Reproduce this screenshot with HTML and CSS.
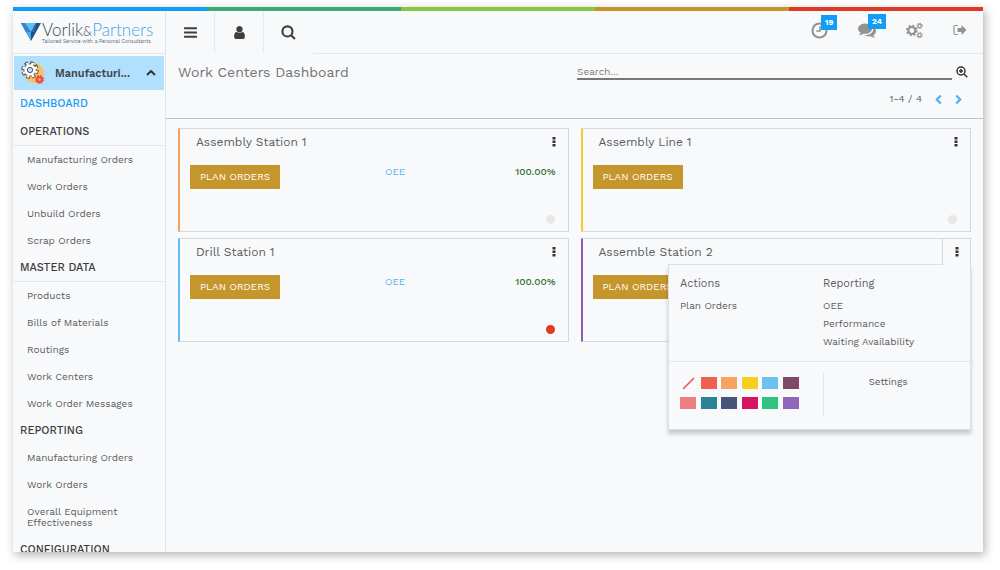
FILE: index.html
```html
<!DOCTYPE html>
<html lang="en">
<head>
<meta charset="utf-8">
<meta name="viewport" content="width=device-width, initial-scale=1">
<title>Work Centers Dashboard</title>
<link rel="stylesheet" href="styles.css">
</head>
<body>
<svg class="defs" aria-hidden="true">
  <symbol id="i-kebab" viewBox="0 0 4 10"><path d="M.5 0h3v2.500h-3zM.5 3.500h3V6h-3zM.5 7h3v2.500h-3z"/></symbol>
</svg>
<div class="app">
  <div class="strip"><i class="s1"></i><i class="s2"></i><i class="s3"></i><i class="s4"></i><i class="s5"></i></div>
  <div class="shell">
    <aside class="sidebar">
      <a class="logo" href="#">
        <svg class="logo-mark" viewBox="0 0 40 36" aria-hidden="true">
          <path fill="#1d4f88" d="M0 0h40L20 36z"/>
          <path fill="#2f86c8" d="M0 0h10l10 18-10 0z"/>
          <path fill="#62bdf2" d="M8 0h22L20 18z"/>
          <path fill="#4aa9e8" d="M10 18h10v18z"/>
          <path fill="#2a6fae" d="M20 18L30 0l-3 18z"/>
        </svg>
        <span class="logo-text">
          <span class="logo-name">Vorlik<small>&amp;</small><b>Partners</b></span>
          <span class="logo-tag">Tailored Service with a Personal Consultants</span>
        </span>
      </a>
      <button class="module" type="button">
        <svg class="module-icon" viewBox="0 0 24 24" aria-hidden="true">
          <circle cx="13" cy="12" r="10" fill="#fbc062"/>
          <circle cx="9" cy="9" r="7" fill="none" stroke="#4a4f5c" stroke-width="3.500" stroke-dasharray="3.500 2"/>
          <circle cx="9" cy="9" r="6.500" fill="#4a4f5c"/>
          <circle cx="9" cy="9" r="6.500" fill="none" stroke="#fff" stroke-width="2.600" stroke-dasharray="2.200 2.900" stroke-dashoffset="-.6"/>
          <circle cx="9" cy="9" r="5.700" fill="#fff"/>
          <circle cx="9" cy="9" r="2.600" fill="#cfe3f5" stroke="#4a4f5c"/>
          <circle cx="18.500" cy="18.500" r="3.600" fill="none" stroke="#ee4f43" stroke-width="2" stroke-dasharray="1.600 1.230"/>
          <circle cx="18.500" cy="18.500" r="2.400" fill="none" stroke="#ee4f43" stroke-width="2.400"/>
        </svg>
        <span class="module-name">Manufacturi...</span>
        <svg class="chev" viewBox="0 0 10 6" aria-hidden="true"><path d="M1 5l4-4 4 4"/></svg>
      </button>
      <nav class="menu">
        <a class="top active" href="#">DASHBOARD</a>
        <h2 class="ruled">OPERATIONS</h2>
        <a href="#">Manufacturing Orders</a>
        <a href="#">Work Orders</a>
        <a href="#">Unbuild Orders</a>
        <a href="#">Scrap Orders</a>
        <h2 class="ruled">MASTER DATA</h2>
        <a href="#">Products</a>
        <a href="#">Bills of Materials</a>
        <a href="#">Routings</a>
        <a href="#">Work Centers</a>
        <a href="#">Work Order Messages</a>
        <h2>REPORTING</h2>
        <a href="#">Manufacturing Orders</a>
        <a href="#">Work Orders</a>
        <a href="#">Overall Equipment Effectiveness</a>
        <h2>CONFIGURATION</h2>
      </nav>
    </aside>
    <div class="content">
      <header class="topbar">
        <div class="tools">
          <button type="button" aria-label="Menu"><svg viewBox="0 0 14 14"><path d="M1 2h12v2H1zM1 6h12v2H1zM1 10h12v2H1z"/></svg></button>
          <button type="button" aria-label="User"><svg viewBox="0 0 1792 1792"><path d="M1536 1399q0 109-62.500 187t-150.500 78h-854q-88 0-150.500-78t-62.500-187q0-85 8.500-160.500t31.500-152 58.500-131 94-89 134.500-34.500q131 128 313 128t313-128q76 0 134.500 34.500t94 89 58.500 131 31.500 152 8.500 160.500zm-256-887q0 159-112.500 271.500t-271.500 112.500-271.500-112.500-112.500-271.500 112.500-271.500 271.500-112.500 271.500 112.500 112.500 271.500z"/></svg></button>
          <button type="button" aria-label="Search"><svg viewBox="0 0 14 14" class="line"><circle cx="6" cy="6" r="4.700"/><path d="M9.500 9.500l3.500 3.500"/></svg></button>
        </div>
        <div class="status">
          <button type="button" aria-label="Activities"><svg viewBox="0 0 16 16" class="line"><circle cx="8" cy="8" r="6.600"/><path class="thin" d="M8.500 4v4.500H5"/></svg><span class="badge">19</span></button>
          <button type="button" aria-label="Messages"><svg class="wide" viewBox="0 0 1792 1792"><path d="M1408 768q0 139-94 257t-256.500 186.500-353.500 68.500q-86 0-176-16-124 88-278 128-36 9-86 16h-3q-11 0-20.500-8t-11.500-21q-1-3-1-6.500t.5-6.500 2-6l2.500-5 3.500-5.500 4-5 4.500-5 4-4.500q5-6 23-25t26-29.500 22.500-29 25-38.500 20.500-44q-124-72-195-177t-71-224q0-139 94-257t256.500-186.500 353.500-68.500 353.500 68.500 256.500 186.500 94 257zm384 256q0 120-71 224.500t-195 176.500q10 24 20.500 44t25 38.500 22.500 29 26 29.500 23 25q1 1 4 4.500t4.500 5 4 5 3.500 5.500l2.500 5 2 6 .5 6.500-1 6.500q-3 14-13 22t-22 7q-50-7-86-16-154-40-278-128-90 16-176 16-271 0-472-132 58 4 88 4 161 0 309-45t264-129q125-92 192-212t67-254q0-77-23-152 129 71 204 178t75 230z"/></svg><span class="badge">24</span></button>
          <button type="button" aria-label="Settings"><svg viewBox="0 0 16 16" class="cogs"><circle cx="5.500" cy="8" r="3.300" stroke-width="2"/><circle cx="5.500" cy="8" r="4.700" stroke-width="1.600" stroke-dasharray="1.850 1.840"/><circle cx="12.800" cy="3.600" r="1.600" stroke-width="1.100"/><circle cx="12.800" cy="3.600" r="2.400" stroke-width="1" stroke-dasharray="1 .88"/><circle cx="12.800" cy="12.400" r="1.600" stroke-width="1.100"/><circle cx="12.800" cy="12.400" r="2.400" stroke-width="1" stroke-dasharray="1 .88"/></svg></button>
          <button type="button" aria-label="Log out"><svg class="exit" viewBox="0 0 14 14"><path d="M5 2.500H2.500a1.500 1.500 0 0 0-1.500 1.500v6a1.500 1.500 0 0 0 1.500 1.500H5" fill="none" stroke="currentColor" stroke-width="1.200"/><path d="M4.500 5h4V2l5 5-5 5V9h-4z"/></svg></button>
        </div>
      </header>
      <section class="control">
        <h1>Work Centers Dashboard</h1>
        <div class="finder">
          <div class="search">
            <input type="search" placeholder="Search..." aria-label="Search work centers">
            <button type="button" aria-label="Advanced search"><svg viewBox="0 0 12 12"><circle cx="5" cy="5" r="4"/><path d="M8 8l3.300 3.300M5 3v4M3 5h4"/></svg></button>
          </div>
          <div class="pager">
            <span>1-4 / 4</span>
            <button type="button" aria-label="Previous"><svg viewBox="0 0 6 8"><path d="M5 .5L1.500 4 5 7.500"/></svg></button>
            <button type="button" aria-label="Next"><svg viewBox="0 0 6 8"><path d="M1 .5L4.500 4 1 7.500"/></svg></button>
          </div>
        </div>
      </section>
      <main class="cards">
        <article class="card orange">
          <header><h3>Assembly Station 1</h3><button class="kebab" type="button" aria-label="Options"><svg><use href="#i-kebab"/></svg></button></header>
          <div class="row"><button class="plan" type="button">PLAN ORDERS</button><a class="oee" href="#">OEE</a><span class="pct">100.00%</span></div>
          <span class="dot"></span>
        </article>
        <article class="card yellow">
          <header><h3>Assembly Line 1</h3><button class="kebab" type="button" aria-label="Options"><svg><use href="#i-kebab"/></svg></button></header>
          <div class="row"><button class="plan" type="button">PLAN ORDERS</button></div>
          <span class="dot"></span>
        </article>
        <article class="card blue">
          <header><h3>Drill Station 1</h3><button class="kebab" type="button" aria-label="Options"><svg><use href="#i-kebab"/></svg></button></header>
          <div class="row"><button class="plan" type="button">PLAN ORDERS</button><a class="oee" href="#">OEE</a><span class="pct">100.00%</span></div>
          <span class="dot red"></span>
        </article>
        <article class="card purple">
          <header><h3>Assemble Station 2</h3><button class="kebab open" type="button" aria-label="Options" aria-expanded="true"><svg><use href="#i-kebab"/></svg></button></header>
          <div class="row"><button class="plan" type="button">PLAN ORDERS</button></div>
          <div class="popup">
            <div class="popup-links">
              <div><h4>Actions</h4><a href="#">Plan Orders</a></div>
              <div><h4>Reporting</h4><a href="#">OEE</a><a href="#">Performance</a><a href="#">Waiting Availability</a></div>
            </div>
            <div class="popup-foot">
              <div class="swatches">
                <button class="none" type="button" aria-label="No color"><svg viewBox="0 0 16 12"><path d="M3 12L14 1"/></svg></button>
                <button class="c1" type="button" aria-label="Red"></button>
                <button class="c2" type="button" aria-label="Orange"></button>
                <button class="c3" type="button" aria-label="Yellow"></button>
                <button class="c4" type="button" aria-label="Light blue"></button>
                <button class="c5" type="button" aria-label="Dark purple"></button>
                <button class="c6" type="button" aria-label="Salmon"></button>
                <button class="c7" type="button" aria-label="Teal"></button>
                <button class="c8" type="button" aria-label="Dark blue"></button>
                <button class="c9" type="button" aria-label="Fuchsia"></button>
                <button class="c10" type="button" aria-label="Green"></button>
                <button class="c11" type="button" aria-label="Purple"></button>
              </div>
              <a class="settings" href="#">Settings</a>
            </div>
          </div>
        </article>
      </main>
    </div>
  </div>
</div>
</body>
</html>
```

FILE: styles.css
```css
* { box-sizing: border-box; }
body {
  margin: 0;
  padding: 7px 17px 18px 13px;
  background: #fff;
  color: #5c5c5c;
  font: 10px/12px "Work Sans", Inter, "Open Sans", sans-serif;
}
h1, h2, h3, h4 { margin: 0; font-weight: 400; }
a { color: inherit; text-decoration: none; }
button { margin: 0; padding: 0; border: 0; background: none; color: inherit; font: inherit; cursor: pointer; }
svg { display: block; fill: currentColor; }
.defs { position: absolute; width: 0; height: 0; }

.app {
  display: flex;
  flex-direction: column;
  height: calc(100vh - 25px);
  background: #f8f9fb;
  box-shadow: 2px 3px 9px rgba(0, 0, 0, .3);
}
.strip { display: grid; grid-template-columns: repeat(5, 1fr); height: 4px; flex: none; }
.s1 { background: #119cf5; }
.s2 { background: #3bab7c; }
.s3 { background: #85c943; }
.s4 { background: #c5962b; }
.s5 { background: #e03a27; }
.shell { display: flex; flex: 1; min-height: 0; }

.sidebar { width: 153px; flex: none; overflow: hidden; border-right: 1px solid #e3e5e8; }
.logo {
  display: flex;
  align-items: center;
  gap: 1px;
  height: 43px;
  padding-left: 8px;
  border-bottom: 1px solid #e3e5e8;
}
.logo-mark { width: 20px; height: 18px; flex: none; }
.logo-text { display: flex; flex-direction: column; white-space: nowrap; }
.logo-name { color: #3c4650; font: 300 17px/16px Lato, sans-serif; }
.logo-name small { font-size: 13px; }
.logo-name b { color: #4aa3df; font-weight: 300; }
.logo-tag { color: #59636d; font-size: 5px; line-height: 4px; }

.module {
  display: flex;
  align-items: center;
  width: calc(100% - 2px);
  height: 34px;
  margin: 2px 1px 0;
  padding: 0 8px 0 7px;
  background: #b0e0fd;
  color: #3f454b;
  text-align: left;
}
.module-icon { width: 24px; height: 24px; }
.module-name { flex: 1; padding-top: 2px; margin-left: 10px; font-size: 11px; font-weight: 600; }
.chev { width: 10px; height: 6px; fill: none; stroke: #333; stroke-width: 2; }

.menu { padding: 0 1px; }
.menu h2, .menu a { display: block; }
.menu h2 { padding: 8px 6px 7px; color: #3c3c3c; font-size: 11px; line-height: 12px; }
.menu .ruled { border-bottom: 1px solid #e3e5e8; }
.menu a { padding: 8px 40px 8px 13px; line-height: 11px; white-space: nowrap; }
.menu a:last-of-type { white-space: normal; }
.menu .top { padding: 8px 6px 9px; color: #119cf5; font-size: 11px; }
.menu h2, .menu .top { font-weight: 500; }

.content { display: flex; flex: 1; flex-direction: column; min-width: 0; }
.topbar { display: flex; justify-content: space-between; height: 43px; flex: none; border-bottom: 1px solid #e6e8ea; }
.tools { display: flex; color: #3e3e3e; margin-bottom: -1px; background: #f8f9fb; }
.tools button { display: grid; place-items: center; width: 49px; height: 42px; border-right: 1px solid #e6e8ea; }
.tools button:last-child { border: 0; }
.tools svg { width: 15px; height: 15px; }
.line { fill: none; stroke: currentColor; stroke-width: 2; }
.thin { stroke-width: 1.500; }
.status { display: flex; align-items: center; gap: 30px; padding: 0 16px 4px 0; color: #939393; }
.status button { position: relative; }
.status svg { width: 17px; height: 17px; }
.status .wide { width: 18px; height: 18px; }
.status .exit { width: 14px; height: 14px; }
.cogs { fill: none; stroke: currentColor; }
.badge {
  position: absolute;
  top: -7px;
  left: 10px;
  padding: 0 4px;
  background: #119cf5;
  color: #fff;
  font-size: 8px;
  font-weight: 700;
  line-height: 15px;
}

.control {
  display: flex;
  justify-content: space-between;
  height: 65px;
  flex: none;
  padding: 9px 15px 0 12px;
  border-bottom: 1px solid #b4c3d4;
}
.control h1 { color: #747474; font-size: 14px; line-height: 18px; }
.finder { width: 391px; }
.search { display: flex; align-items: center; gap: 4px; }
.search input {
  flex: 1;
  min-width: 0;
  height: 17px;
  padding: 2px 0 0;
  border: 0;
  border-bottom: 2px solid #777;
  outline: 0;
  background: none;
  color: #555;
  font: inherit;
}
.search input::placeholder { color: #808080; opacity: 1; }
.search svg { width: 12px; height: 12px; fill: none; stroke: #333; stroke-width: 1.500; }
.pager { display: flex; justify-content: flex-end; align-items: center; gap: 13px; margin-top: 13px; padding-right: 6px; }
.pager svg { width: 7px; height: 9px; fill: none; stroke: #4db2f2; stroke-width: 2; }

.cards {
  display: grid;
  grid-template-columns: 1fr 1fr;
  gap: 6px 12px;
  padding: 9px 12px;
}
.card {
  position: relative;
  display: flex;
  flex-direction: column;
  height: 104px;
  border: 1px solid #d6d8db;
  border-left-width: 2px;
}
.orange { border-left-color: #f4a261; }
.yellow { border-left-color: #f4cb2f; }
.blue { border-left-color: #65bbef; }
.purple { border-left-color: #8e5cae; }
.card header { display: flex; justify-content: space-between; height: 26px; padding-left: 16px; }
.card h3 { font-size: 12px; line-height: 26px; }
.kebab { display: grid; place-items: center; width: 28px; color: #333; }
.kebab svg { width: 4px; height: 10px; }
.kebab.open { z-index: 2; border-left: 1px solid #d6d8db; background: #f8f9fb; }
.row { display: grid; grid-template-columns: 8fr 3fr 4fr; align-items: start; padding: 10px 12px 0 10px; }
.plan {
  justify-self: start;
  height: 24px;
  padding: 0 10px;
  background: #c5962b;
  color: #fff;
  white-space: nowrap;
}
.oee { color: #5ab5ee; }
.oee, .pct { padding-top: 1px; }
.pct { justify-self: end; color: #2f7034; font-weight: 500; }
.dot { width: 9px; height: 9px; margin: auto 13px 7px auto; border-radius: 50%; background: #e8e8e8; }
.dot.red { background: #e03a20; }

.popup {
  position: absolute;
  top: 25px;
  right: -1px;
  z-index: 1;
  width: 303px;
  border: 1px solid #dcdee0;
  background: #f8f9fb;
  box-shadow: 0 4px 4px rgba(0, 0, 0, .2);
}
.popup-links { display: grid; grid-template-columns: 143px 1fr; height: 97px; padding: 10px 11px 0; border-bottom: 1px solid #e3e5e8; }
.popup h4 { font-size: 11px; line-height: 18px; margin-bottom: 4px; }
.popup-links a { display: block; line-height: 18px; }
.popup-foot { display: flex; padding: 11px 11px 13px; }
.swatches {
  display: grid;
  grid-template-columns: repeat(6, 16px);
  grid-auto-rows: 12px;
  justify-content: space-between;
  row-gap: 8px;
  width: 119px;
  margin: 4px 24px 7px 0;
}
.swatches svg { width: 16px; height: 12px; stroke: #f04a50; stroke-width: 1.500; }
.c1 { background: #f06050; }
.c2 { background: #f4a460; }
.c3 { background: #f7cd1f; }
.c4 { background: #6cc1ed; }
.c5 { background: #814968; }
.c6 { background: #eb7e7f; }
.c7 { background: #2c8397; }
.c8 { background: #475577; }
.c9 { background: #d6145f; }
.c10 { background: #30c381; }
.c11 { background: #9365b8; }
.settings { flex: 1; padding: 3px 7px 0 0; border-left: 1px solid #e3e5e8; text-align: center; }
```
